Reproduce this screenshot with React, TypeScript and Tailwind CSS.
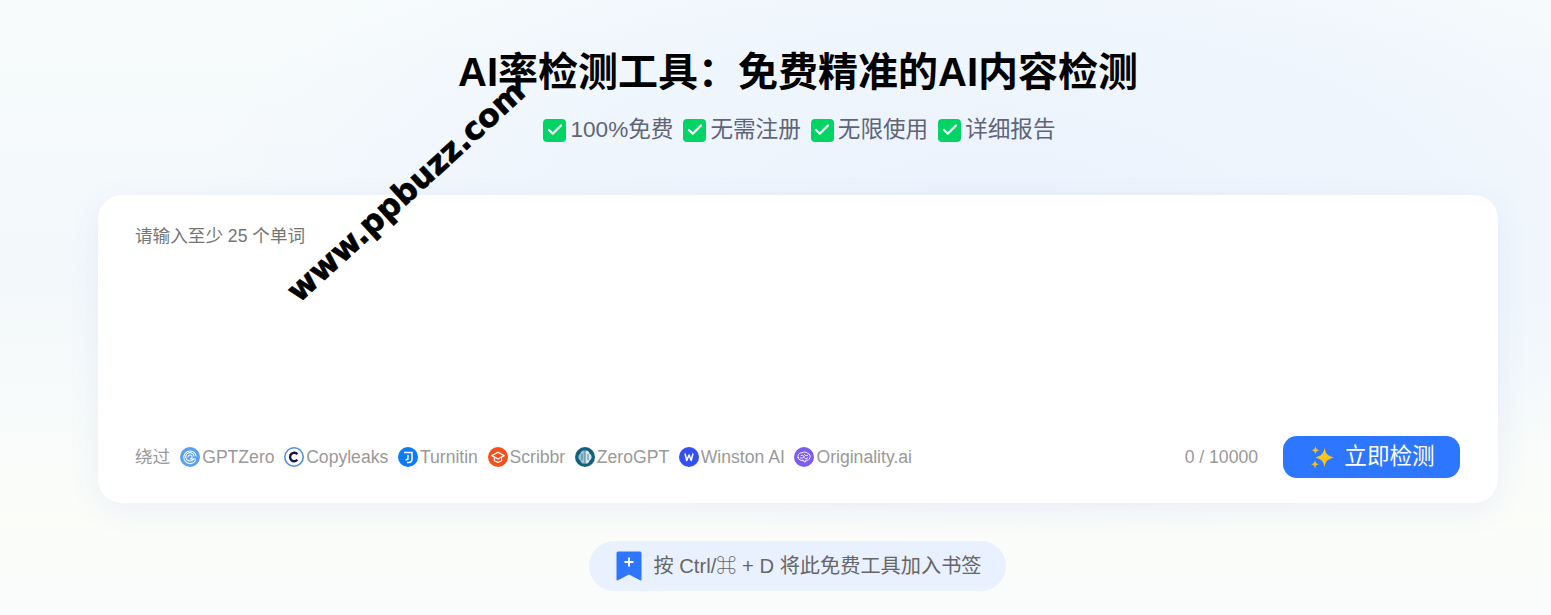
import React from "react";
import { Check } from "lucide-react";

const FONT = "font-['Liberation_Sans','Noto_Sans_CJK_SC',sans-serif]";
const TITLE = "AI率检测工具\uFF1A免费精准的AI内容检测";

function GptZeroIcon() {
  return (
    <svg viewBox="0 0 20 20" className="w-5 h-5 shrink-0">
      <circle cx="10" cy="10" r="10" fill="#5aa0f2" />
      <g fill="none" stroke="#fff" strokeWidth="1.1" strokeLinecap="round">
        <path d="M15.5 13.500A6.300 6.300 0 1 1 16.200 9" />
        <path d="M13.500 12A4.200 4.200 0 1 1 14 9" />
        <path d="M8 10a2 2 0 1 1 2 2h5.500" />
      </g>
    </svg>
  );
}

function CopyleaksIcon() {
  return (
    <svg viewBox="0 0 20 20" className="w-5 h-5 shrink-0">
      <circle cx="10" cy="10" r="9.200" fill="#fff" stroke="#4a90e2" strokeWidth="1.600" />
      <path d="M13.400 7.200A4.200 4.200 0 1 0 13.400 12.800" fill="none" stroke="#14183e" strokeWidth="2.400" />
    </svg>
  );
}

function TurnitinIcon() {
  return (
    <svg viewBox="0 0 20 20" className="w-5 h-5 shrink-0">
      <circle cx="10" cy="10" r="10" fill="#0a7cf5" />
      <path d="M6 5.500h8v7a3 3 0 0 1-3 3H9" fill="none" stroke="#fff" strokeWidth="1.500" />
      <path d="M10 8v4l-2.500 1.200" fill="none" stroke="#fff" strokeWidth="1.400" />
    </svg>
  );
}

function ScribbrIcon() {
  return (
    <svg viewBox="0 0 20 20" className="w-5 h-5 shrink-0">
      <circle cx="10" cy="10" r="10" fill="#f4511e" />
      <g fill="none" stroke="#fff" strokeWidth="1.200" strokeLinejoin="round">
        <path d="M3.800 8.600 10 5.200l6.200 3.400L10 12z" />
        <path d="M6.400 10.500v3.200L10 15.400l3.600-1.700v-3.200" />
      </g>
    </svg>
  );
}

function ZeroGptIcon() {
  return (
    <svg viewBox="0 0 20 20" className="w-5 h-5 shrink-0">
      <circle cx="10" cy="10" r="10" fill="#14607f" />
      <path d="M10 3.500a4 4 0 0 0-4.600 3 4 4 0 0 0 0 7 4 4 0 0 0 4.600 3z" fill="#9fc2d0" />
      <path d="M10 3.500a4 4 0 0 1 4.600 3 4 4 0 0 1 0 7 4 4 0 0 1-4.600 3z" fill="#d9e5ea" />
      <path d="M10 3.500v13M7 7v6M13 7v6" stroke="#14607f" strokeWidth=".7" />
    </svg>
  );
}

function WinstonIcon() {
  return (
    <svg viewBox="0 0 20 20" className="w-5 h-5 shrink-0">
      <circle cx="10" cy="10" r="10" fill="#3350f0" />
      <path d="M6 6.500 7.800 13.500 10 8l2.200 5.500L14 6.500" fill="none" stroke="#fff" strokeWidth="1.500" strokeLinejoin="round" />
    </svg>
  );
}

function OriginalityIcon() {
  return (
    <svg viewBox="0 0 20 20" className="w-5 h-5 shrink-0">
      <circle cx="10" cy="10" r="10" fill="#7c5cf5" />
      <g fill="none" stroke="#fff" strokeWidth="1" strokeLinecap="round">
        <path d="M4 10.500c-.6-3 1.800-5 4-4.600C9.500 4.600 13 4.800 13.800 6.500 15.800 6.800 16.800 9 15.800 10.800 15.600 12.800 13.500 13.500 12 13l-.3 1.800H10l-.5-1.500C7.500 14 4.600 13 4 10.500z" />
        <path d="M7 8.500c1.500-.7 2.500 0 3 1M10.500 7.500c.5 1 1.500 1.500 3 1M6.500 11c1.500.3 3 0 4-1M11 11.500c1 .3 2 0 2.800-.7" />
      </g>
    </svg>
  );
}

function SparkleIcon() {
  return (
    <svg viewBox="0 0 24 24" className="w-6 h-6 shrink-0" fill="#fcc21b">
      <path d="M14.500 2.500c1 6.200 3 8.300 9.300 10-6.300 1.700-8.300 3.800-9.300 10-1-6.200-3-8.300-9.300-10 6.300-1.700 8.300-3.800 9.300-10z" />
      <path d="M5.500 1c.5 2.800 1.300 3.700 4 4.300-2.700.6-3.500 1.500-4 4.300-.5-2.800-1.300-3.700-4-4.300 2.700-.6 3.500-1.500 4-4.300z" />
      <path d="M5 15c.5 2.800 1.300 3.700 4 4.300-2.700.6-3.500 1.500-4 4.300-.5-2.800-1.300-3.700-4-4.300 2.700-.6 3.500-1.500 4-4.300z" />
    </svg>
  );
}

function BookmarkIcon() {
  return (
    <svg viewBox="0 0 26 30" className="w-[26px] h-[30px] shrink-0">
      <path d="M2 .5h22A1.500 1.500 0 0 1 25.500 2v27l-1 .6L13 23.500 1.500 29.600l-1-.6V2A1.500 1.500 0 0 1 2 .5z" fill="#2d76ff" />
      <path d="M13 6.500v9M8.500 11h9" stroke="#fff" strokeWidth="2" />
    </svg>
  );
}

const features = ["100%免费", "无需注册", "无限使用", "详细报告"];

const detectors = [
  { name: "GPTZero", icon: <GptZeroIcon /> },
  { name: "Copyleaks", icon: <CopyleaksIcon /> },
  { name: "Turnitin", icon: <TurnitinIcon /> },
  { name: "Scribbr", icon: <ScribbrIcon /> },
  { name: "ZeroGPT", icon: <ZeroGptIcon /> },
  { name: "Winston AI", icon: <WinstonIcon /> },
  { name: "Originality.ai", icon: <OriginalityIcon /> },
];

export default function App() {
  const [text, setText] = React.useState("");

  return (
    <div className={`${FONT} relative h-[615px] overflow-hidden bg-[radial-gradient(ellipse_800px_330px_at_64%_34%,#ebf2fc_0%,#eff6fd_60%,transparent_100%),linear-gradient(180deg,#f7fbfb_0%,#f3f8fb_45%,#fbfdf9_85%,#fafbfc_100%)]`}>
      <div className="ml-[98px] w-[1400px]">
        {/* Header */}
        <div className="pt-[47px] flex flex-col items-center">
          <h1 className="text-[40px] leading-[50px] font-bold text-black">{TITLE}</h1>
          <div className="mt-[16px] flex items-center gap-[10px] text-[22.6px] leading-[34px] text-[#5f6478] ml-[3px]">
            {features.map((f) => (
              <div key={f} className="flex items-center gap-[4px]">
                <span className="w-[23px] h-[23px] rounded-[4px] bg-[#00d464] flex items-center justify-center">
                  <Check className="w-[18px] h-[18px] text-white" strokeWidth={3} />
                </span>
                <span>{f}</span>
              </div>
            ))}
          </div>
        </div>

        {/* Input card */}
        <div className="mt-[48px] h-[308px] bg-white rounded-[24px] shadow-[0_8px_32px_rgba(60,90,200,0.08)] pl-[37px] pr-[38px] pt-[28px] pb-[25px] flex flex-col">
          <textarea
            value={text}
            onChange={(e) => setText(e.target.value)}
            placeholder="请输入至少 25 个单词"
            className="flex-1 w-full resize-none outline-none text-[17.6px] leading-[26px] placeholder:text-[#757575]"
          />
          <div className="flex items-center justify-between">
            <div className="flex items-center text-[17.6px] text-[#999999]">
              <span className="mr-[10px]">绕过</span>
              <div className="flex items-center gap-[9.6px]">
                {detectors.map((d) => (
                  <div key={d.name} className="flex items-center gap-[2px]">
                    {d.icon}
                    <span>{d.name}</span>
                  </div>
                ))}
              </div>
            </div>
            <div className="flex items-center gap-[25px]">
              <span className="text-[17.6px] text-[#999999]">0 / 10000</span>
              <button className="w-[177px] h-[42px] rounded-[14px] bg-[#2d76ff] text-white text-[22.6px] pl-[2px] flex items-center justify-center gap-[10px]">
                <SparkleIcon />
                立即检测
              </button>
            </div>
          </div>
        </div>

        {/* Bookmark hint */}
        <div className="mt-[38px] flex justify-center pr-[1px]">
          <div className="h-[50px] w-[417px] rounded-full bg-[#e9f1ff] pl-[3px] flex items-center justify-center gap-[11px] text-[20.2px] text-[#666666]">
            <BookmarkIcon />
            <span>按 Ctrl/⌘ + D 将此免费工具加入书签</span>
          </div>
        </div>
      </div>

      {/* Watermark */}
      <div className="absolute left-[251px] top-[166px] -rotate-[42.5deg] font-['DejaVu_Sans',sans-serif] text-[31.5px] leading-[50px] font-bold text-black [-webkit-text-stroke:0.7px_black] whitespace-nowrap pointer-events-none">
        www.ppbuzz.com
      </div>
    </div>
  );
}
